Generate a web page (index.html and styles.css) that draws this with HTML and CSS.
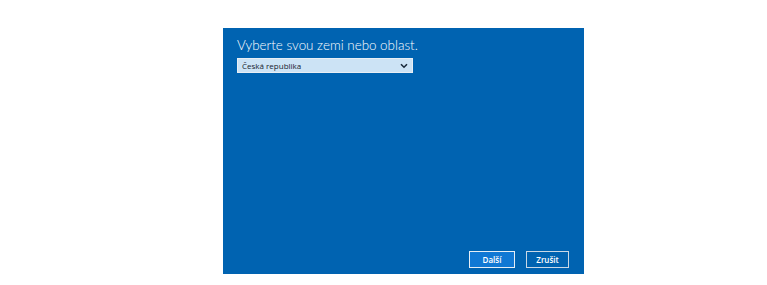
FILE: index.html
```html
<!DOCTYPE html>
<html lang="cs">
<head>
    <meta charset="UTF-8">
    <meta name="viewport" content="width=device-width, initial-scale=1.0">
    <title>Oblast</title>
    <link rel="stylesheet" href="styles.css">
</head>
<body>
    <div class="setup">
        <h1 class="setup-title">Vyberte svou zemi nebo oblast.</h1>
        <div class="setup-select">
            <span class="setup-select-value">Česká republika</span>
            <svg class="setup-select-arrow" width="8" height="6" viewBox="0 0 8 6">
                <path d="M1 1.2 L4 4.2 L7 1.2" fill="none" stroke="#1a2a3a" stroke-width="1.6"/>
            </svg>
        </div>
        <div class="setup-actions">
            <button class="setup-btn setup-btn-primary">Další</button>
            <button class="setup-btn">Zrušit</button>
        </div>
    </div>
</body>
</html>
```

FILE: styles.css
```css
* {
    box-sizing: border-box;
    margin: 0;
    padding: 0;
}

body {
    background-color: #ffffff;
    font-family: 'Open Sans', 'Noto Sans', sans-serif;
}

.setup {
    margin: 28px 0 0 223px;
    width: 361px;
    height: 246px;
    background-color: #0063b1;
    display: flex;
    flex-direction: column;
    padding: 8px 15px 6px 14px;
}

.setup-title {
    color: #ffffff;
    font-family: 'Lato', 'Open Sans', sans-serif;
    font-size: 13.4px;
    font-weight: 300;
    line-height: 18px;
    height: 22px;
}

.setup-select {
    width: 176px;
    height: 15px;
    background-color: #cce3f5;
    border: 1px solid #e8eef4;
    display: flex;
    align-items: center;
    justify-content: space-between;
    padding: 0 4px 0 4px;
}

.setup-select-value {
    font-size: 8px;
    color: #16222e;
    line-height: 13px;
}

.setup-actions {
    margin-top: auto;
    display: flex;
    justify-content: flex-end;
    gap: 11px;
}

.setup-btn {
    height: 17px;
    min-width: 43px;
    padding: 0 8px;
    background-color: #0063b1;
    border: 1px solid #c9d8e6;
    color: #ffffff;
    font-family: 'Open Sans', 'Noto Sans', sans-serif;
    font-size: 8px;
    font-weight: 600;
}

.setup-btn-primary {
    width: 46px;
    background-color: #1078d4;
    border-color: #e6eef6;
}
```
